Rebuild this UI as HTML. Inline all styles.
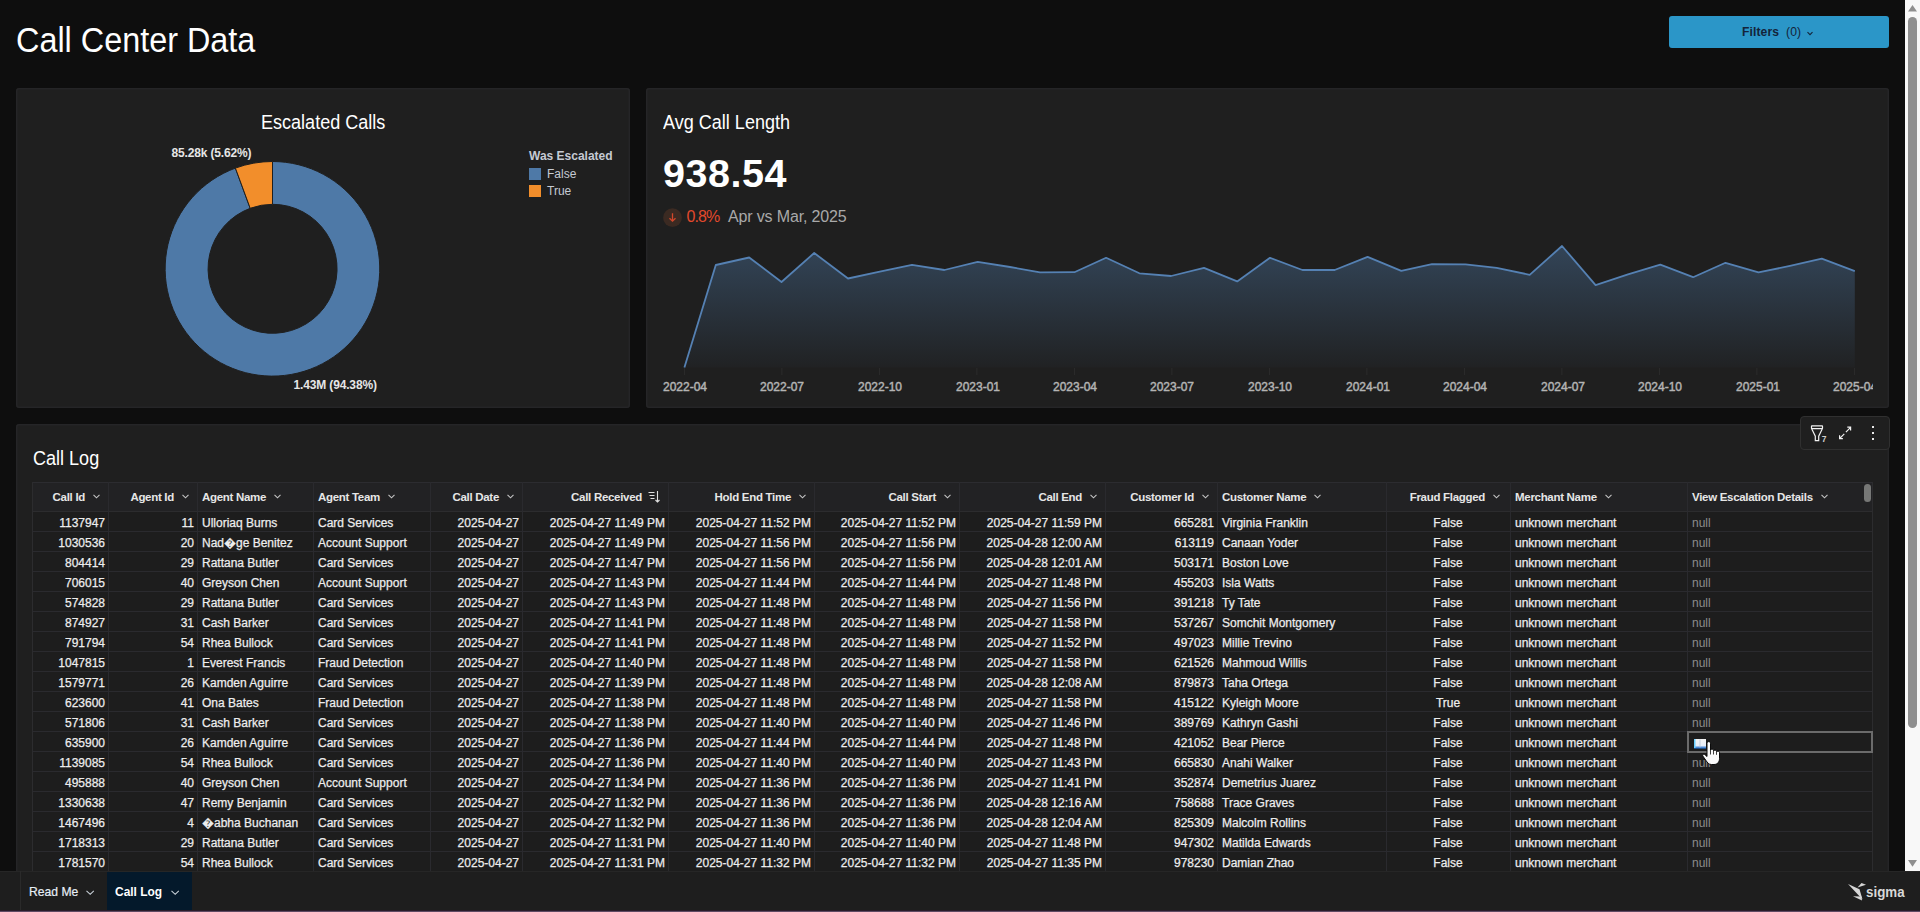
<!DOCTYPE html>
<html><head><meta charset="utf-8">
<style>
*{margin:0;padding:0;box-sizing:border-box}
html,body{width:1920px;height:912px;overflow:hidden;background:#0e0e0e;font-family:"Liberation Sans",sans-serif;color:#fff}
.abs{position:absolute}
#title{position:absolute;left:16px;top:20px;font-size:35.5px;line-height:40px;transform:scaleX(0.912);transform-origin:0 0;color:#fff;white-space:nowrap}
#filters{position:absolute;left:1669px;top:16px;width:220px;height:32px;background:#2b96c8;border-radius:3px;color:#14243a;font-size:13px;font-weight:bold;text-align:center;line-height:32px}
.card{position:absolute;background:#1f1f1f;border-radius:3px;box-shadow:inset 0 0 0 1.5px #252527}
#c1{left:16px;top:88px;width:614px;height:320px}
#c2{left:646px;top:88px;width:1243px;height:320px}
#c3{left:16px;top:424px;width:1873px;height:460px}
.ctitle{position:absolute;font-size:20.5px;line-height:24px;transform:scaleX(0.88);transform-origin:0 0;color:#fff;white-space:nowrap}
#sb{position:absolute;left:1905px;top:0;width:15px;height:871px;background:#f8f8f8}
#sbthumb{position:absolute;left:3px;top:17px;width:9px;height:711px;background:#8f8f8f;border-radius:5px}
#footer{position:absolute;left:0;top:871px;width:1920px;height:41px;background:#1e1e1e}
#tbl{position:absolute;left:32px;top:482px;width:1841px;height:400px;overflow:hidden;font-size:12px}
#tbl .hdr{position:absolute;left:0;top:0;width:1841px;height:31px;background:#222224;border-top:1px solid #2c2c30;border-bottom:2px solid #2c2c2e}
.hc{position:absolute;top:0;height:30px;line-height:30px;font-weight:bold;font-size:11.5px;letter-spacing:-0.3px;color:#e6e6e6;white-space:nowrap;overflow:hidden}
.hc.ar{text-align:right;padding-right:8px}
.hc.al{text-align:left;padding-left:5px}
.hc.ac{text-align:right;padding-right:10px}
.chev{margin-left:8px;vertical-align:middle;position:relative;top:-1px}
.sorti{margin-left:6px;vertical-align:middle;position:relative;top:-1px}
.row{position:absolute;left:0;width:1841px;height:20px;border-bottom:1px solid #2a2a2e;background:#1d1d1d}
.c{position:absolute;top:1px;height:20px;line-height:20px;color:#ededed;white-space:nowrap;overflow:hidden;-webkit-text-stroke:0.25px #ededed}
.c.ar{text-align:right;padding-right:3px}
.c.al{text-align:left;padding-left:5px}
.c.ac{text-align:center}
.c.nul{color:#8c8c8c;-webkit-text-stroke:0}
.vl{position:absolute;top:0;width:1px;height:400px;background:#2a2a2e}
</style></head><body>
<div id="title">Call Center Data</div>
<div id="filters"><span style="position:absolute;left:73px;top:0;font-size:13.5px;transform:scaleX(0.9);transform-origin:0 0;white-space:nowrap;letter-spacing:0.1px">Filters&nbsp; <span style="font-weight:normal">(0)</span></span><svg class="abs" style="left:137px;top:14.5px" width="8" height="6"><path d="M1.5 1.2L4 3.7L6.5 1.2" stroke="#14243a" stroke-width="1.1" fill="none"/></svg></div>

<div class="card" id="c1"></div>
<div class="card" id="c2"></div>
<div class="card" id="c3"></div>

<!-- card 1: donut -->
<div class="ctitle" style="left:261px;top:110px">Escalated Calls</div>
<svg class="abs" style="left:0;top:0" width="640" height="410">
  <path d="M272.5 161.5 A107.3 107.3 0 1 1 235.4 168.1 L250.2 208.3 A64.5 64.5 0 1 0 272.5 204.3 Z" fill="#4e79a7" stroke="#1f1f1f" stroke-width="1"/>
  <path d="M272.5 161.5 A107.3 107.3 0 0 0 235.4 168.1 L250.2 208.3 A64.5 64.5 0 0 1 272.5 204.3 Z" fill="#f28e2b" stroke="#1f1f1f" stroke-width="1"/>
  <text x="171.5" y="157" font-family="Liberation Sans" font-size="12" font-weight="bold" letter-spacing="-0.15" fill="#e6e6e6">85.28k (5.62%)</text>
  <text x="293.5" y="389" font-family="Liberation Sans" font-size="12" font-weight="bold" letter-spacing="-0.15" fill="#e6e6e6">1.43M (94.38%)</text>
  <text x="529" y="160" font-family="Liberation Sans" font-size="12" font-weight="bold" fill="#c5cad3">Was Escalated</text>
  <rect x="529" y="168" width="12" height="12" fill="#4e79a7"/>
  <text x="547" y="178" font-family="Liberation Sans" font-size="12" fill="#c5cad3">False</text>
  <rect x="529" y="185" width="12" height="12" fill="#f28e2b"/>
  <text x="547" y="195" font-family="Liberation Sans" font-size="12" fill="#c5cad3">True</text>
</svg>

<!-- card 2: line chart -->
<div class="ctitle" style="left:663px;top:110px">Avg Call Length</div>
<div class="abs" style="left:663px;top:149px;font-size:39.5px;letter-spacing:0.55px;font-weight:bold;color:#fff;line-height:48px">938.54</div>
<svg class="abs" style="left:662.5px;top:207.5px" width="20" height="20"><circle cx="9.5" cy="9.7" r="9.4" fill="#3b2a22"/><path d="M9.5 5.2v8M6.5 10.2L9.5 13.2l3-3" stroke="#d2472b" stroke-width="1.3" fill="none"/></svg>
<div class="abs" style="left:686.5px;top:207px;font-size:16px;line-height:20px;color:#e2492c;letter-spacing:-0.9px">0.8%</div>
<div class="abs" style="left:728px;top:207px;font-size:16px;line-height:20px;color:#a9a9a9;letter-spacing:-0.15px">Apr vs Mar, 2025</div>
<svg class="abs" style="left:0;top:0" width="1900" height="410">
  <defs><linearGradient id="g1" x1="0" y1="0" x2="0" y2="1"><stop offset="0" stop-color="#4e79a7" stop-opacity="0.42"/><stop offset="1" stop-color="#4e79a7" stop-opacity="0.03"/></linearGradient></defs>
  <path d="M684.4 367.5 L715.8 265.0 L749.2 257.5 L781.5 282.0 L814.2 253.0 L848.0 278.5 L879.8 271.7 L912.0 264.8 L944.4 270.0 L977.7 261.9 L1010.0 267.0 L1040.0 272.3 L1074.4 272.2 L1106.1 257.8 L1139.4 273.3 L1171.1 276.0 L1204.0 267.8 L1237.2 281.4 L1270.0 257.8 L1302.4 270.0 L1334.7 270.0 L1367.6 256.9 L1401.3 270.9 L1432.0 264.1 L1465.5 264.3 L1496.7 267.9 L1529.7 274.8 L1562.0 246.0 L1595.6 285.1 L1628.0 274.3 L1660.3 264.7 L1693.1 277.2 L1725.5 262.8 L1758.5 272.4 L1790.0 265.9 L1821.8 258.7 L1854.8 271.2 L1854.8 367.5 Z" fill="url(#g1)"/>
  <path d="M684.4 367.5 L715.8 265.0 L749.2 257.5 L781.5 282.0 L814.2 253.0 L848.0 278.5 L879.8 271.7 L912.0 264.8 L944.4 270.0 L977.7 261.9 L1010.0 267.0 L1040.0 272.3 L1074.4 272.2 L1106.1 257.8 L1139.4 273.3 L1171.1 276.0 L1204.0 267.8 L1237.2 281.4 L1270.0 257.8 L1302.4 270.0 L1334.7 270.0 L1367.6 256.9 L1401.3 270.9 L1432.0 264.1 L1465.5 264.3 L1496.7 267.9 L1529.7 274.8 L1562.0 246.0 L1595.6 285.1 L1628.0 274.3 L1660.3 264.7 L1693.1 277.2 L1725.5 262.8 L1758.5 272.4 L1790.0 265.9 L1821.8 258.7 L1854.8 271.2" fill="none" stroke="#5581b3" stroke-width="1.8" stroke-linejoin="round"/>
  <rect x="683.9" y="368" width="1" height="7" fill="#2c2c2c"/><rect x="781.4" y="368" width="1" height="7" fill="#2c2c2c"/><rect x="878.9" y="368" width="1" height="7" fill="#2c2c2c"/><rect x="976.4" y="368" width="1" height="7" fill="#2c2c2c"/><rect x="1073.9" y="368" width="1" height="7" fill="#2c2c2c"/><rect x="1171.4" y="368" width="1" height="7" fill="#2c2c2c"/><rect x="1268.9" y="368" width="1" height="7" fill="#2c2c2c"/><rect x="1366.4" y="368" width="1" height="7" fill="#2c2c2c"/><rect x="1463.9" y="368" width="1" height="7" fill="#2c2c2c"/><rect x="1561.4" y="368" width="1" height="7" fill="#2c2c2c"/><rect x="1658.9" y="368" width="1" height="7" fill="#2c2c2c"/><rect x="1756.4" y="368" width="1" height="7" fill="#2c2c2c"/><rect x="1853.9" y="368" width="1" height="7" fill="#2c2c2c"/>
  <clipPath id="lblclip"><rect x="640" y="370" width="1233" height="30"/></clipPath>
  <g font-family="Liberation Sans" font-size="12" fill="#b4b4b4" stroke="#b4b4b4" stroke-width="0.45" text-anchor="middle" clip-path="url(#lblclip)">
    <text x="685" y="391">2022-04</text><text x="782" y="391">2022-07</text><text x="880" y="391">2022-10</text><text x="978" y="391">2023-01</text><text x="1075" y="391">2023-04</text><text x="1172" y="391">2023-07</text><text x="1270" y="391">2023-10</text><text x="1368" y="391">2024-01</text><text x="1465" y="391">2024-04</text><text x="1563" y="391">2024-07</text><text x="1660" y="391">2024-10</text><text x="1758" y="391">2025-01</text><text x="1855" y="391">2025-04</text>
  </g>
</svg>

<!-- card 3: call log -->
<div class="ctitle" style="left:33px;top:446px">Call Log</div>
<div class="abs" style="left:1800px;top:416px;width:90px;height:34px;background:#1f1f1f;border:1px solid #303030;border-radius:4px"></div>
<svg class="abs" style="left:1800px;top:416px" width="90" height="34">
  <g stroke="#f2f2f2" stroke-width="1.2" fill="none">
    <rect x="11.5" y="9.8" width="11" height="2.8" rx="0.4"/>
    <path d="M11.8 13L15.3 20.2V24.6H18.7V20.2L22.2 13"/>
    <path d="M39.6 22.6L44.3 17.9M45.9 16.1L50.6 11.4M39.6 19.3V22.6H42.9M47.3 11.2H50.6V14.5"/>
  </g>
  <text x="21.8" y="25.8" font-family="Liberation Sans" font-size="8.5" font-weight="bold" fill="#cfcfcf">7</text>
  <g fill="#e8e8e8"><rect x="72" y="10" width="2" height="2"/><rect x="72" y="16" width="2" height="2"/><rect x="72" y="22" width="2" height="2"/></g>
</svg>

<div id="tbl"><div class="hdr"></div><div class="hc ar" style="left:0px;width:76px"><span class="ht">Call Id</span><svg class="chev" width="7" height="5" viewBox="0 0 7 5"><path d="M0.5 0.8L3.5 3.8L6.5 0.8" stroke="#c4c4c4" stroke-width="1.1" fill="none"/></svg></div><div class="hc ar" style="left:76px;width:89px"><span class="ht">Agent Id</span><svg class="chev" width="7" height="5" viewBox="0 0 7 5"><path d="M0.5 0.8L3.5 3.8L6.5 0.8" stroke="#c4c4c4" stroke-width="1.1" fill="none"/></svg></div><div class="hc al" style="left:165px;width:116px"><span class="ht">Agent Name</span><svg class="chev" width="7" height="5" viewBox="0 0 7 5"><path d="M0.5 0.8L3.5 3.8L6.5 0.8" stroke="#c4c4c4" stroke-width="1.1" fill="none"/></svg></div><div class="hc al" style="left:281px;width:117px"><span class="ht">Agent Team</span><svg class="chev" width="7" height="5" viewBox="0 0 7 5"><path d="M0.5 0.8L3.5 3.8L6.5 0.8" stroke="#c4c4c4" stroke-width="1.1" fill="none"/></svg></div><div class="hc ar" style="left:398px;width:92px"><span class="ht">Call Date</span><svg class="chev" width="7" height="5" viewBox="0 0 7 5"><path d="M0.5 0.8L3.5 3.8L6.5 0.8" stroke="#c4c4c4" stroke-width="1.1" fill="none"/></svg></div><div class="hc ar" style="left:490px;width:146px"><span class="ht">Call Received</span><svg class="sorti" width="12" height="13" viewBox="0 0 12 13"><path d="M0.5 2.5h6M1.5 5.5h5M2.5 8.5h4M9.5 1v11M7.5 10l2 2 2-2" stroke="#e0e0e0" stroke-width="1.1" fill="none"/></svg></div><div class="hc ar" style="left:636px;width:146px"><span class="ht">Hold End Time</span><svg class="chev" width="7" height="5" viewBox="0 0 7 5"><path d="M0.5 0.8L3.5 3.8L6.5 0.8" stroke="#c4c4c4" stroke-width="1.1" fill="none"/></svg></div><div class="hc ar" style="left:782px;width:145px"><span class="ht">Call Start</span><svg class="chev" width="7" height="5" viewBox="0 0 7 5"><path d="M0.5 0.8L3.5 3.8L6.5 0.8" stroke="#c4c4c4" stroke-width="1.1" fill="none"/></svg></div><div class="hc ar" style="left:927px;width:146px"><span class="ht">Call End</span><svg class="chev" width="7" height="5" viewBox="0 0 7 5"><path d="M0.5 0.8L3.5 3.8L6.5 0.8" stroke="#c4c4c4" stroke-width="1.1" fill="none"/></svg></div><div class="hc ar" style="left:1073px;width:112px"><span class="ht">Customer Id</span><svg class="chev" width="7" height="5" viewBox="0 0 7 5"><path d="M0.5 0.8L3.5 3.8L6.5 0.8" stroke="#c4c4c4" stroke-width="1.1" fill="none"/></svg></div><div class="hc al" style="left:1185px;width:169px"><span class="ht">Customer Name</span><svg class="chev" width="7" height="5" viewBox="0 0 7 5"><path d="M0.5 0.8L3.5 3.8L6.5 0.8" stroke="#c4c4c4" stroke-width="1.1" fill="none"/></svg></div><div class="hc ac" style="left:1354px;width:124px"><span class="ht">Fraud Flagged</span><svg class="chev" width="7" height="5" viewBox="0 0 7 5"><path d="M0.5 0.8L3.5 3.8L6.5 0.8" stroke="#c4c4c4" stroke-width="1.1" fill="none"/></svg></div><div class="hc al" style="left:1478px;width:177px"><span class="ht">Merchant Name</span><svg class="chev" width="7" height="5" viewBox="0 0 7 5"><path d="M0.5 0.8L3.5 3.8L6.5 0.8" stroke="#c4c4c4" stroke-width="1.1" fill="none"/></svg></div><div class="hc al" style="left:1655px;width:186px"><span class="ht">View Escalation Details</span><svg class="chev" width="7" height="5" viewBox="0 0 7 5"><path d="M0.5 0.8L3.5 3.8L6.5 0.8" stroke="#c4c4c4" stroke-width="1.1" fill="none"/></svg></div><div class="row" style="top:30px"><div class="c ar" style="left:0px;width:76px">1137947</div><div class="c ar" style="left:76px;width:89px">11</div><div class="c al" style="left:165px;width:116px">Ulloriaq Burns</div><div class="c al" style="left:281px;width:117px">Card Services</div><div class="c ar" style="left:398px;width:92px">2025-04-27</div><div class="c ar" style="left:490px;width:146px">2025-04-27 11:49 PM</div><div class="c ar" style="left:636px;width:146px">2025-04-27 11:52 PM</div><div class="c ar" style="left:782px;width:145px">2025-04-27 11:52 PM</div><div class="c ar" style="left:927px;width:146px">2025-04-27 11:59 PM</div><div class="c ar" style="left:1073px;width:112px">665281</div><div class="c al" style="left:1185px;width:169px">Virginia Franklin</div><div class="c ac" style="left:1354px;width:124px">False</div><div class="c al" style="left:1478px;width:177px">unknown merchant</div><div class="c al nul" style="left:1655px;width:186px">null</div></div><div class="row" style="top:50px"><div class="c ar" style="left:0px;width:76px">1030536</div><div class="c ar" style="left:76px;width:89px">20</div><div class="c al" style="left:165px;width:116px">Nad�ge Benitez</div><div class="c al" style="left:281px;width:117px">Account Support</div><div class="c ar" style="left:398px;width:92px">2025-04-27</div><div class="c ar" style="left:490px;width:146px">2025-04-27 11:49 PM</div><div class="c ar" style="left:636px;width:146px">2025-04-27 11:56 PM</div><div class="c ar" style="left:782px;width:145px">2025-04-27 11:56 PM</div><div class="c ar" style="left:927px;width:146px">2025-04-28 12:00 AM</div><div class="c ar" style="left:1073px;width:112px">613119</div><div class="c al" style="left:1185px;width:169px">Canaan Yoder</div><div class="c ac" style="left:1354px;width:124px">False</div><div class="c al" style="left:1478px;width:177px">unknown merchant</div><div class="c al nul" style="left:1655px;width:186px">null</div></div><div class="row" style="top:70px"><div class="c ar" style="left:0px;width:76px">804414</div><div class="c ar" style="left:76px;width:89px">29</div><div class="c al" style="left:165px;width:116px">Rattana Butler</div><div class="c al" style="left:281px;width:117px">Card Services</div><div class="c ar" style="left:398px;width:92px">2025-04-27</div><div class="c ar" style="left:490px;width:146px">2025-04-27 11:47 PM</div><div class="c ar" style="left:636px;width:146px">2025-04-27 11:56 PM</div><div class="c ar" style="left:782px;width:145px">2025-04-27 11:56 PM</div><div class="c ar" style="left:927px;width:146px">2025-04-28 12:01 AM</div><div class="c ar" style="left:1073px;width:112px">503171</div><div class="c al" style="left:1185px;width:169px">Boston Love</div><div class="c ac" style="left:1354px;width:124px">False</div><div class="c al" style="left:1478px;width:177px">unknown merchant</div><div class="c al nul" style="left:1655px;width:186px">null</div></div><div class="row" style="top:90px"><div class="c ar" style="left:0px;width:76px">706015</div><div class="c ar" style="left:76px;width:89px">40</div><div class="c al" style="left:165px;width:116px">Greyson Chen</div><div class="c al" style="left:281px;width:117px">Account Support</div><div class="c ar" style="left:398px;width:92px">2025-04-27</div><div class="c ar" style="left:490px;width:146px">2025-04-27 11:43 PM</div><div class="c ar" style="left:636px;width:146px">2025-04-27 11:44 PM</div><div class="c ar" style="left:782px;width:145px">2025-04-27 11:44 PM</div><div class="c ar" style="left:927px;width:146px">2025-04-27 11:48 PM</div><div class="c ar" style="left:1073px;width:112px">455203</div><div class="c al" style="left:1185px;width:169px">Isla Watts</div><div class="c ac" style="left:1354px;width:124px">False</div><div class="c al" style="left:1478px;width:177px">unknown merchant</div><div class="c al nul" style="left:1655px;width:186px">null</div></div><div class="row" style="top:110px"><div class="c ar" style="left:0px;width:76px">574828</div><div class="c ar" style="left:76px;width:89px">29</div><div class="c al" style="left:165px;width:116px">Rattana Butler</div><div class="c al" style="left:281px;width:117px">Card Services</div><div class="c ar" style="left:398px;width:92px">2025-04-27</div><div class="c ar" style="left:490px;width:146px">2025-04-27 11:43 PM</div><div class="c ar" style="left:636px;width:146px">2025-04-27 11:48 PM</div><div class="c ar" style="left:782px;width:145px">2025-04-27 11:48 PM</div><div class="c ar" style="left:927px;width:146px">2025-04-27 11:56 PM</div><div class="c ar" style="left:1073px;width:112px">391218</div><div class="c al" style="left:1185px;width:169px">Ty Tate</div><div class="c ac" style="left:1354px;width:124px">False</div><div class="c al" style="left:1478px;width:177px">unknown merchant</div><div class="c al nul" style="left:1655px;width:186px">null</div></div><div class="row" style="top:130px"><div class="c ar" style="left:0px;width:76px">874927</div><div class="c ar" style="left:76px;width:89px">31</div><div class="c al" style="left:165px;width:116px">Cash Barker</div><div class="c al" style="left:281px;width:117px">Card Services</div><div class="c ar" style="left:398px;width:92px">2025-04-27</div><div class="c ar" style="left:490px;width:146px">2025-04-27 11:41 PM</div><div class="c ar" style="left:636px;width:146px">2025-04-27 11:48 PM</div><div class="c ar" style="left:782px;width:145px">2025-04-27 11:48 PM</div><div class="c ar" style="left:927px;width:146px">2025-04-27 11:58 PM</div><div class="c ar" style="left:1073px;width:112px">537267</div><div class="c al" style="left:1185px;width:169px">Somchit Montgomery</div><div class="c ac" style="left:1354px;width:124px">False</div><div class="c al" style="left:1478px;width:177px">unknown merchant</div><div class="c al nul" style="left:1655px;width:186px">null</div></div><div class="row" style="top:150px"><div class="c ar" style="left:0px;width:76px">791794</div><div class="c ar" style="left:76px;width:89px">54</div><div class="c al" style="left:165px;width:116px">Rhea Bullock</div><div class="c al" style="left:281px;width:117px">Card Services</div><div class="c ar" style="left:398px;width:92px">2025-04-27</div><div class="c ar" style="left:490px;width:146px">2025-04-27 11:41 PM</div><div class="c ar" style="left:636px;width:146px">2025-04-27 11:48 PM</div><div class="c ar" style="left:782px;width:145px">2025-04-27 11:48 PM</div><div class="c ar" style="left:927px;width:146px">2025-04-27 11:52 PM</div><div class="c ar" style="left:1073px;width:112px">497023</div><div class="c al" style="left:1185px;width:169px">Millie Trevino</div><div class="c ac" style="left:1354px;width:124px">False</div><div class="c al" style="left:1478px;width:177px">unknown merchant</div><div class="c al nul" style="left:1655px;width:186px">null</div></div><div class="row" style="top:170px"><div class="c ar" style="left:0px;width:76px">1047815</div><div class="c ar" style="left:76px;width:89px">1</div><div class="c al" style="left:165px;width:116px">Everest Francis</div><div class="c al" style="left:281px;width:117px">Fraud Detection</div><div class="c ar" style="left:398px;width:92px">2025-04-27</div><div class="c ar" style="left:490px;width:146px">2025-04-27 11:40 PM</div><div class="c ar" style="left:636px;width:146px">2025-04-27 11:48 PM</div><div class="c ar" style="left:782px;width:145px">2025-04-27 11:48 PM</div><div class="c ar" style="left:927px;width:146px">2025-04-27 11:58 PM</div><div class="c ar" style="left:1073px;width:112px">621526</div><div class="c al" style="left:1185px;width:169px">Mahmoud Willis</div><div class="c ac" style="left:1354px;width:124px">False</div><div class="c al" style="left:1478px;width:177px">unknown merchant</div><div class="c al nul" style="left:1655px;width:186px">null</div></div><div class="row" style="top:190px"><div class="c ar" style="left:0px;width:76px">1579771</div><div class="c ar" style="left:76px;width:89px">26</div><div class="c al" style="left:165px;width:116px">Kamden Aguirre</div><div class="c al" style="left:281px;width:117px">Card Services</div><div class="c ar" style="left:398px;width:92px">2025-04-27</div><div class="c ar" style="left:490px;width:146px">2025-04-27 11:39 PM</div><div class="c ar" style="left:636px;width:146px">2025-04-27 11:48 PM</div><div class="c ar" style="left:782px;width:145px">2025-04-27 11:48 PM</div><div class="c ar" style="left:927px;width:146px">2025-04-28 12:08 AM</div><div class="c ar" style="left:1073px;width:112px">879873</div><div class="c al" style="left:1185px;width:169px">Taha Ortega</div><div class="c ac" style="left:1354px;width:124px">False</div><div class="c al" style="left:1478px;width:177px">unknown merchant</div><div class="c al nul" style="left:1655px;width:186px">null</div></div><div class="row" style="top:210px"><div class="c ar" style="left:0px;width:76px">623600</div><div class="c ar" style="left:76px;width:89px">41</div><div class="c al" style="left:165px;width:116px">Ona Bates</div><div class="c al" style="left:281px;width:117px">Fraud Detection</div><div class="c ar" style="left:398px;width:92px">2025-04-27</div><div class="c ar" style="left:490px;width:146px">2025-04-27 11:38 PM</div><div class="c ar" style="left:636px;width:146px">2025-04-27 11:48 PM</div><div class="c ar" style="left:782px;width:145px">2025-04-27 11:48 PM</div><div class="c ar" style="left:927px;width:146px">2025-04-27 11:58 PM</div><div class="c ar" style="left:1073px;width:112px">415122</div><div class="c al" style="left:1185px;width:169px">Kyleigh Moore</div><div class="c ac" style="left:1354px;width:124px">True</div><div class="c al" style="left:1478px;width:177px">unknown merchant</div><div class="c al nul" style="left:1655px;width:186px">null</div></div><div class="row" style="top:230px"><div class="c ar" style="left:0px;width:76px">571806</div><div class="c ar" style="left:76px;width:89px">31</div><div class="c al" style="left:165px;width:116px">Cash Barker</div><div class="c al" style="left:281px;width:117px">Card Services</div><div class="c ar" style="left:398px;width:92px">2025-04-27</div><div class="c ar" style="left:490px;width:146px">2025-04-27 11:38 PM</div><div class="c ar" style="left:636px;width:146px">2025-04-27 11:40 PM</div><div class="c ar" style="left:782px;width:145px">2025-04-27 11:40 PM</div><div class="c ar" style="left:927px;width:146px">2025-04-27 11:46 PM</div><div class="c ar" style="left:1073px;width:112px">389769</div><div class="c al" style="left:1185px;width:169px">Kathryn Gashi</div><div class="c ac" style="left:1354px;width:124px">False</div><div class="c al" style="left:1478px;width:177px">unknown merchant</div><div class="c al nul" style="left:1655px;width:186px">null</div></div><div class="row" style="top:250px"><div class="c ar" style="left:0px;width:76px">635900</div><div class="c ar" style="left:76px;width:89px">26</div><div class="c al" style="left:165px;width:116px">Kamden Aguirre</div><div class="c al" style="left:281px;width:117px">Card Services</div><div class="c ar" style="left:398px;width:92px">2025-04-27</div><div class="c ar" style="left:490px;width:146px">2025-04-27 11:36 PM</div><div class="c ar" style="left:636px;width:146px">2025-04-27 11:44 PM</div><div class="c ar" style="left:782px;width:145px">2025-04-27 11:44 PM</div><div class="c ar" style="left:927px;width:146px">2025-04-27 11:48 PM</div><div class="c ar" style="left:1073px;width:112px">421052</div><div class="c al" style="left:1185px;width:169px">Bear Pierce</div><div class="c ac" style="left:1354px;width:124px">False</div><div class="c al" style="left:1478px;width:177px">unknown merchant</div><div class="c al nul" style="left:1655px;width:186px"></div></div><div class="row" style="top:270px"><div class="c ar" style="left:0px;width:76px">1139085</div><div class="c ar" style="left:76px;width:89px">54</div><div class="c al" style="left:165px;width:116px">Rhea Bullock</div><div class="c al" style="left:281px;width:117px">Card Services</div><div class="c ar" style="left:398px;width:92px">2025-04-27</div><div class="c ar" style="left:490px;width:146px">2025-04-27 11:36 PM</div><div class="c ar" style="left:636px;width:146px">2025-04-27 11:40 PM</div><div class="c ar" style="left:782px;width:145px">2025-04-27 11:40 PM</div><div class="c ar" style="left:927px;width:146px">2025-04-27 11:43 PM</div><div class="c ar" style="left:1073px;width:112px">665830</div><div class="c al" style="left:1185px;width:169px">Anahi Walker</div><div class="c ac" style="left:1354px;width:124px">False</div><div class="c al" style="left:1478px;width:177px">unknown merchant</div><div class="c al nul" style="left:1655px;width:186px">null</div></div><div class="row" style="top:290px"><div class="c ar" style="left:0px;width:76px">495888</div><div class="c ar" style="left:76px;width:89px">40</div><div class="c al" style="left:165px;width:116px">Greyson Chen</div><div class="c al" style="left:281px;width:117px">Account Support</div><div class="c ar" style="left:398px;width:92px">2025-04-27</div><div class="c ar" style="left:490px;width:146px">2025-04-27 11:34 PM</div><div class="c ar" style="left:636px;width:146px">2025-04-27 11:36 PM</div><div class="c ar" style="left:782px;width:145px">2025-04-27 11:36 PM</div><div class="c ar" style="left:927px;width:146px">2025-04-27 11:41 PM</div><div class="c ar" style="left:1073px;width:112px">352874</div><div class="c al" style="left:1185px;width:169px">Demetrius Juarez</div><div class="c ac" style="left:1354px;width:124px">False</div><div class="c al" style="left:1478px;width:177px">unknown merchant</div><div class="c al nul" style="left:1655px;width:186px">null</div></div><div class="row" style="top:310px"><div class="c ar" style="left:0px;width:76px">1330638</div><div class="c ar" style="left:76px;width:89px">47</div><div class="c al" style="left:165px;width:116px">Remy Benjamin</div><div class="c al" style="left:281px;width:117px">Card Services</div><div class="c ar" style="left:398px;width:92px">2025-04-27</div><div class="c ar" style="left:490px;width:146px">2025-04-27 11:32 PM</div><div class="c ar" style="left:636px;width:146px">2025-04-27 11:36 PM</div><div class="c ar" style="left:782px;width:145px">2025-04-27 11:36 PM</div><div class="c ar" style="left:927px;width:146px">2025-04-28 12:16 AM</div><div class="c ar" style="left:1073px;width:112px">758688</div><div class="c al" style="left:1185px;width:169px">Trace Graves</div><div class="c ac" style="left:1354px;width:124px">False</div><div class="c al" style="left:1478px;width:177px">unknown merchant</div><div class="c al nul" style="left:1655px;width:186px">null</div></div><div class="row" style="top:330px"><div class="c ar" style="left:0px;width:76px">1467496</div><div class="c ar" style="left:76px;width:89px">4</div><div class="c al" style="left:165px;width:116px">�abha Buchanan</div><div class="c al" style="left:281px;width:117px">Card Services</div><div class="c ar" style="left:398px;width:92px">2025-04-27</div><div class="c ar" style="left:490px;width:146px">2025-04-27 11:32 PM</div><div class="c ar" style="left:636px;width:146px">2025-04-27 11:36 PM</div><div class="c ar" style="left:782px;width:145px">2025-04-27 11:36 PM</div><div class="c ar" style="left:927px;width:146px">2025-04-28 12:04 AM</div><div class="c ar" style="left:1073px;width:112px">825309</div><div class="c al" style="left:1185px;width:169px">Malcolm Rollins</div><div class="c ac" style="left:1354px;width:124px">False</div><div class="c al" style="left:1478px;width:177px">unknown merchant</div><div class="c al nul" style="left:1655px;width:186px">null</div></div><div class="row" style="top:350px"><div class="c ar" style="left:0px;width:76px">1718313</div><div class="c ar" style="left:76px;width:89px">29</div><div class="c al" style="left:165px;width:116px">Rattana Butler</div><div class="c al" style="left:281px;width:117px">Card Services</div><div class="c ar" style="left:398px;width:92px">2025-04-27</div><div class="c ar" style="left:490px;width:146px">2025-04-27 11:31 PM</div><div class="c ar" style="left:636px;width:146px">2025-04-27 11:40 PM</div><div class="c ar" style="left:782px;width:145px">2025-04-27 11:40 PM</div><div class="c ar" style="left:927px;width:146px">2025-04-27 11:48 PM</div><div class="c ar" style="left:1073px;width:112px">947302</div><div class="c al" style="left:1185px;width:169px">Matilda Edwards</div><div class="c ac" style="left:1354px;width:124px">False</div><div class="c al" style="left:1478px;width:177px">unknown merchant</div><div class="c al nul" style="left:1655px;width:186px">null</div></div><div class="row" style="top:370px"><div class="c ar" style="left:0px;width:76px">1781570</div><div class="c ar" style="left:76px;width:89px">54</div><div class="c al" style="left:165px;width:116px">Rhea Bullock</div><div class="c al" style="left:281px;width:117px">Card Services</div><div class="c ar" style="left:398px;width:92px">2025-04-27</div><div class="c ar" style="left:490px;width:146px">2025-04-27 11:31 PM</div><div class="c ar" style="left:636px;width:146px">2025-04-27 11:32 PM</div><div class="c ar" style="left:782px;width:145px">2025-04-27 11:32 PM</div><div class="c ar" style="left:927px;width:146px">2025-04-27 11:35 PM</div><div class="c ar" style="left:1073px;width:112px">978230</div><div class="c al" style="left:1185px;width:169px">Damian Zhao</div><div class="c ac" style="left:1354px;width:124px">False</div><div class="c al" style="left:1478px;width:177px">unknown merchant</div><div class="c al nul" style="left:1655px;width:186px">null</div></div><div class="vl" style="left:76px"></div><div class="vl" style="left:165px"></div><div class="vl" style="left:281px"></div><div class="vl" style="left:398px"></div><div class="vl" style="left:490px"></div><div class="vl" style="left:636px"></div><div class="vl" style="left:782px"></div><div class="vl" style="left:927px"></div><div class="vl" style="left:1073px"></div><div class="vl" style="left:1185px"></div><div class="vl" style="left:1354px"></div><div class="vl" style="left:1478px"></div><div class="vl" style="left:1655px"></div></div>
<div class="abs" style="left:1864px;top:484px;width:7px;height:18px;background:#767776;border-radius:3.5px"></div>
<div class="abs" style="left:1872px;top:482px;width:1px;height:400px;background:#2c2c2e"></div>
<div class="abs" style="left:32px;top:482px;width:1px;height:400px;background:#2c2c2e"></div>
<div class="abs" style="left:1687px;top:731px;width:186px;height:22px;border:2px solid #6b6b6b"></div>
<svg class="abs" style="left:1690px;top:733px" width="40" height="36">
  <defs><linearGradient id="bk" x1="0" y1="0" x2="0" y2="1"><stop offset="0" stop-color="#f4f4f4"/><stop offset="0.65" stop-color="#e8eef8"/><stop offset="0.85" stop-color="#4a8ad8"/><stop offset="1" stop-color="#0d2f5a"/></linearGradient></defs>
  <rect x="4" y="6" width="12" height="10" fill="url(#bk)"/>
  <rect x="4" y="6" width="1.5" height="9" fill="#6ad0ff"/><rect x="9.6" y="6.5" width="0.8" height="8" fill="#b8c4d4"/>
  <path d="M17 10.2C17 8.1 20.5 8.1 20.5 10.2V17.3C20.5 15.6 23.5 15.6 23.5 17.3V18.3C23.5 16.6 26.5 16.6 26.5 18.3V19.3C26.5 17.6 29.5 17.6 29.5 19.3V25.5C29.5 29 27.5 31.5 24 31.5H21.5C18.5 31.5 17.5 29.5 16 27.5L12.8 23C12 21.7 13.6 20.5 14.8 21.5L17 23.5Z" fill="#fafafa" stroke="#0a0a0a" stroke-width="1"/>
  <path d="M20.5 17.3V21.5M23.5 18.3V21.5M26.5 19.3V21.8" stroke="#0a0a0a" stroke-width="0.8"/>
</svg>

<div id="sb"><div id="sbthumb"></div>
<svg class="abs" style="left:0;top:0" width="15" height="871"><path d="M3 11.5L7.5 5L12 11.5Z" fill="#8f8f8f"/><path d="M3 860L7.5 866.8L12 860Z" fill="#8f8f8f"/></svg></div>
<div id="footer">
  <div class="abs" style="left:0;top:0;width:1920px;height:1px;background:#262626"></div>
  <div class="abs" style="left:20px;top:0;width:1px;height:41px;background:#2a2a2a"></div>
  <div class="abs" style="left:107px;top:1px;width:85px;height:40px;background:#04192b"></div>
  <div class="abs" style="left:29px;top:12px;font-size:13.5px;line-height:18px;color:#e6eef6;-webkit-text-stroke:0.2px #e6eef6;transform:scaleX(0.9);transform-origin:0 0;white-space:nowrap">Read Me</div>
  <div class="abs" style="left:115px;top:12px;font-size:13.5px;line-height:18px;font-weight:bold;color:#fff;transform:scaleX(0.885);transform-origin:0 0;white-space:nowrap">Call Log</div>
  <div class="abs" style="left:0;top:39px;width:1920px;height:1px;background:#2a1c29"></div><div class="abs" style="left:0;top:40px;width:1920px;height:1px;background:#5e4a63"></div>
  <svg class="abs" style="left:0;top:0" width="200" height="41"><path d="M86.5 19.8L90.2 23.3L93.8 19.8M171.5 19.8L175.2 23.3L178.8 19.8" stroke="#c8d0d8" stroke-width="1.1" fill="none"/></svg>
  <svg class="abs" style="left:1840px;top:0" width="30" height="41"><g fill="#d6d6d6"><path d="M8 13L19.5 18.2L22.5 28.5Z"/><path d="M17.5 16.5L26 13.8L21.5 12Z"/><path d="M13 25.2L21.5 25.5L22 29.5Z"/></g></svg>
  <div class="abs" style="left:1866px;top:11px;font-size:15px;line-height:20px;font-weight:bold;color:#d8d8d8;transform:scaleX(0.89);transform-origin:0 0;white-space:nowrap">sigma</div>
</div>
</body></html>
